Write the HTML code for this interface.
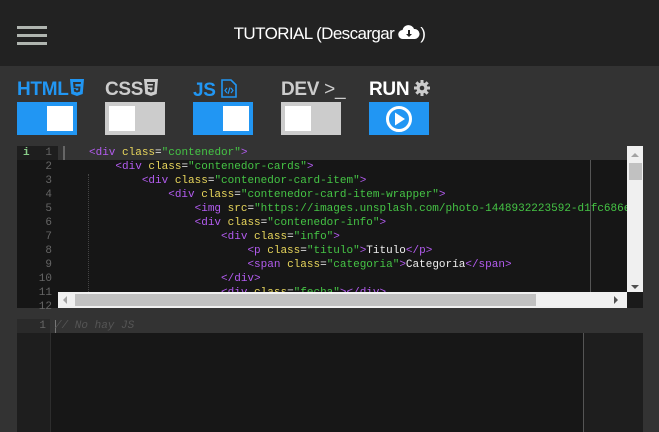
<!DOCTYPE html>
<html><head><meta charset="utf-8"><style>
*{margin:0;padding:0;box-sizing:border-box}
body{width:659px;height:432px;background:#333;overflow:hidden;font-family:"Liberation Sans",sans-serif;position:relative}
.hdr{position:absolute;left:0;top:0;width:659px;height:66px;background:#222}
.ham{position:absolute;left:17px;width:30px;height:3px;background:#b0b5b0}
.title{position:absolute;left:0;width:659px;top:24px;text-align:center;color:#fff;font-size:17px;letter-spacing:-0.6px}
.lbl{position:absolute;top:79px;font-weight:bold;font-size:19px;letter-spacing:-0.3px}
.tg{position:absolute;top:102px;width:60px;height:33px}
.kn{position:absolute;top:4px;width:26px;height:25px;background:#fff}
.ed{position:absolute;left:17px;top:146px;width:626px;height:162px;background:#161616}
.code{position:absolute;font-family:"Liberation Mono",monospace;font-size:11px;line-height:14px;white-space:pre}
.t{color:#b35cf0}.a{color:#e8d65c}.s{color:#45c445}.w{color:#eee}
.ln{position:absolute;left:0;width:41px;text-align:right;padding-right:6px;font-family:"Liberation Mono",monospace;font-size:11px;line-height:14px;color:#666}
</style></head><body>
<div class="hdr"></div>
<div class="ham" style="top:26px"></div><div class="ham" style="top:34px"></div><div class="ham" style="top:42px"></div>
<div class="title">TUTORIAL (Descargar <svg width="22" height="15" viewBox="0 0 22 15" style="vertical-align:-1px"><path d="M5 14a4.5 4.5 0 0 1-.5-9A6 6 0 0 1 16 4a5 5 0 0 1 1 10z" fill="#fff"/><path d="M10 5h2v4h2l-3 3-3-3h2z" fill="#222"/></svg>)</div>

<div class="lbl" style="left:17px;color:#2196f3">HTML<svg width="16" height="18" viewBox="0 0 16 18" style="vertical-align:-2px"><path d="M1 0h14l-1.3 15L8 17l-5.7-2z" fill="#2196f3"/><path d="M4 3h8l-.3 2H6.3l.2 2.5h5l-.5 5L8 13.5 5 12.5 4.8 10h2l.1 1L8 11.5l1.2-.5.2-1.8H4.6z" fill="#333"/></svg></div>
<div class="tg" style="left:17px;background:#2196f3"><div class="kn" style="left:30px"></div></div>
<div class="lbl" style="left:105px;color:#ccc">CSS<svg width="16" height="18" viewBox="0 0 16 18" style="vertical-align:-2px"><path d="M1 0h14l-1.3 15L8 17l-5.7-2z" fill="#ccc"/><path d="M4 3h8l-.8 9.5L8 13.5 5 12.5 4.8 10h2l.1 1L8 11.5l1.2-.5.3-2.5H5l-.2-2h5l.2-1.5H4.2z" fill="#333"/></svg></div>
<div class="tg" style="left:105px;background:#ccc"><div class="kn" style="left:4px"></div></div>
<div class="lbl" style="left:193px;color:#2196f3">JS <svg width="16" height="19" viewBox="0 0 16 19" style="vertical-align:-2px"><path d="M1 1h9l5 5v12H1z" fill="none" stroke="#2196f3" stroke-width="1.6"/><path d="M6 9l-2 2.5L6 14M10 9l2 2.5L10 14M9 8.5l-2 6.5" fill="none" stroke="#2196f3" stroke-width="1.2"/></svg></div>
<div class="tg" style="left:193px;background:#2196f3"><div class="kn" style="left:30px"></div></div>
<div class="lbl" style="left:281px;color:#ccc">DEV <span style="font-weight:normal">&gt;_</span></div>
<div class="tg" style="left:281px;background:#ccc"><div class="kn" style="left:4px"></div></div>
<div class="lbl" style="left:369px;color:#fff">RUN <svg width="16" height="16" viewBox="0 0 16 16" style="vertical-align:-1px"><g fill="#ccc"><circle cx="8" cy="8" r="5.5"/><rect x="6.5" y="0" width="3" height="16"/><rect x="0" y="6.5" width="16" height="3"/><rect x="6.5" y="0" width="3" height="16" transform="rotate(45 8 8)"/><rect x="6.5" y="0" width="3" height="16" transform="rotate(-45 8 8)"/></g><circle cx="8" cy="8" r="2.3" fill="#333"/></svg></div>
<div class="tg" style="left:369px;background:#2196f3"><svg width="60" height="33" viewBox="0 0 60 33"><circle cx="30" cy="17" r="11.5" fill="none" stroke="#fff" stroke-width="3"/><path d="M26 10.5v13l10-6.5z" fill="#fff"/></svg></div>

<div class="ed">
<div style="position:absolute;left:0;top:0;width:610px;height:14px;background:#333"></div>
<div style="position:absolute;left:0;top:0;width:41px;height:14px;background:#1e1e1e"></div>
<div style="position:absolute;left:0;top:14px;width:41px;height:148px;background:#161616"></div>
<div style="position:absolute;left:46px;top:0;width:2px;height:14px;background:#666"></div>
<div style="position:absolute;left:71px;top:28px;height:118px;border-left:1px dotted #444"></div>
<div style="position:absolute;left:573px;top:14px;width:1px;height:132px;background:#555"></div>
<div class="ln" style="top:0"><span style="color:#8c8;font-weight:bold;float:left;padding-left:6px">i</span>1<br>2<br>3<br>4<br>5<br>6<br>7<br>8<br>9<br>10<br>11<br>12</div>
<div class="code" style="left:72px;top:0;width:538px;height:146px;overflow:hidden"><span class="t">&lt;div</span> <span class="a">class</span><span class="w">=</span><span class="s">"contenedor"</span><span class="t">&gt;</span>
    <span class="t">&lt;div</span> <span class="a">class</span><span class="w">=</span><span class="s">"contenedor-cards"</span><span class="t">&gt;</span>
        <span class="t">&lt;div</span> <span class="a">class</span><span class="w">=</span><span class="s">"contenedor-card-item"</span><span class="t">&gt;</span>
            <span class="t">&lt;div</span> <span class="a">class</span><span class="w">=</span><span class="s">"contenedor-card-item-wrapper"</span><span class="t">&gt;</span>
                <span class="t">&lt;img</span> <span class="a">src</span><span class="w">=</span><span class="s">"https://images.unsplash.com/photo-1448932223592-d1fc686e76ea"</span>
                <span class="t">&lt;div</span> <span class="a">class</span><span class="w">=</span><span class="s">"contenedor-info"</span><span class="t">&gt;</span>
                    <span class="t">&lt;div</span> <span class="a">class</span><span class="w">=</span><span class="s">"info"</span><span class="t">&gt;</span>
                        <span class="t">&lt;p</span> <span class="a">class</span><span class="w">=</span><span class="s">"titulo"</span><span class="t">&gt;</span><span class="w">Titulo</span><span class="t">&lt;/p&gt;</span>
                        <span class="t">&lt;span</span> <span class="a">class</span><span class="w">=</span><span class="s">"categoria"</span><span class="t">&gt;</span><span class="w">Categoría</span><span class="t">&lt;/span&gt;</span>
                    <span class="t">&lt;/div&gt;</span>
                    <span class="t">&lt;div</span> <span class="a">class</span><span class="w">=</span><span class="s">"fecha"</span><span class="t">&gt;&lt;/div&gt;</span></div>
<div style="position:absolute;left:610px;top:0;width:16px;height:146px;background:#f0f0f0">
<div style="position:absolute;left:2px;top:17px;width:13px;height:17px;background:#c1c1c1"></div>
<div style="position:absolute;left:4px;top:7px;border:4px solid transparent;border-bottom-color:#a3a3a3;border-top:0"></div>
<div style="position:absolute;left:4px;top:139px;border:4px solid transparent;border-top-color:#505050;border-bottom:0"></div></div>
<div style="position:absolute;left:41px;top:146px;width:569px;height:16px;background:#f0f0f0">
<div style="position:absolute;left:17px;top:2px;width:461px;height:12px;background:#c1c1c1"></div>
<div style="position:absolute;left:5px;top:4px;border:4px solid transparent;border-right-color:#a3a3a3;border-left:0"></div>
<div style="position:absolute;left:556px;top:4px;border:4px solid transparent;border-left-color:#505050;border-right:0"></div></div>
<div style="position:absolute;left:610px;top:146px;width:16px;height:16px;background:#1a1a1a"></div>
</div>

<div style="position:absolute;left:17px;top:319px;width:626px;height:113px;background:#171717">
<div style="position:absolute;left:0;top:0;width:626px;height:14px;background:#333"></div>
<div style="position:absolute;left:0;top:0;width:33px;height:113px;background:#1e1e1e"></div>
<div style="position:absolute;left:0;top:0;width:33px;height:14px;background:#2a2a2a"></div>
<div style="position:absolute;left:33px;top:14px;width:1px;height:99px;background:#2d2d2d"></div>
<div style="position:absolute;left:566px;top:14px;width:60px;height:99px;background:#1e1e1e;border-left:1px solid #555"></div>
<div class="ln" style="top:0;width:29px;padding-right:0">1</div>
<div style="position:absolute;left:38px;top:1px;width:1px;height:13px;background:#777"></div>
<div class="code" style="left:38px;top:0;color:#555;font-style:italic">// No hay JS</div>
</div>
</body></html>
